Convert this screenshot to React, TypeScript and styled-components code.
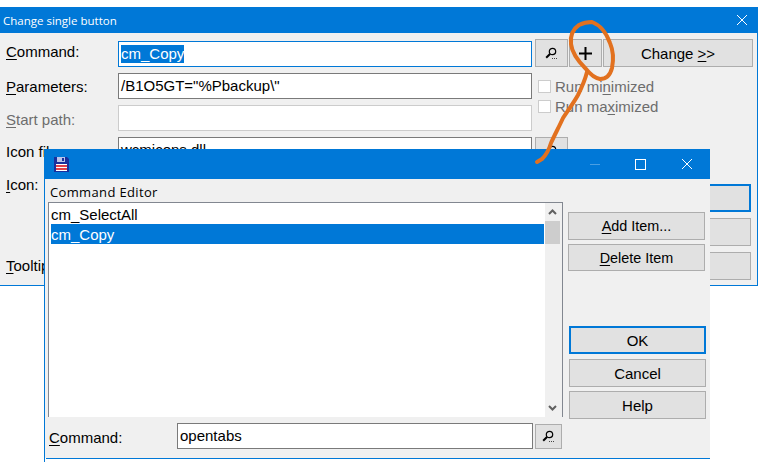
import React from "react";
import styled, { createGlobalStyle } from "styled-components";

const Global = createGlobalStyle`
  html, body { margin: 0; padding: 0; background: #fff; overflow: hidden; }
  * { box-sizing: border-box; }
  u { text-underline-offset: 2px; }
`;

const Desktop = styled.div`
  position: relative;
  width: 760px;
  height: 465px;
  background: #fff;
  overflow: hidden;
  font-family: "Liberation Sans", Arial, sans-serif;
  font-size: 15px;
  color: #000;
`;

const BackWindow = styled.section`
  position: absolute;
  left: 0;
  top: 7px;
  width: 758px;
  height: 279px;
  display: flex;
  flex-direction: column;
  background: #f0f0f0;
  border-right: 1px solid #0078d7;
  border-bottom: 1px solid #0078d7;
`;

const FrontWindow = styled.section`
  position: absolute;
  left: 44px;
  top: 149px;
  width: 666px;
  height: 313px;
  border-left: 1px solid #0078d7;
  display: flex;
  flex-direction: column;
`;

const TitleBar = styled.header<{ $h: number }>`
  height: ${(p) => p.$h}px;
  flex: none;
  background: #0078d7;
  color: #fff;
  display: flex;
  align-items: center;
  font-family: "Open Sans", "Noto Sans", sans-serif;
  font-size: 11.5px;
`;

const TitleText = styled.span`
  padding-left: 3px;
  flex: 1;
`;

const TitleSpacer = styled.span`
  flex: 1;
`;

const IconSlot = styled.span<{ $w: number }>`
  width: ${(p) => p.$w}px;
  display: flex;
  align-items: center;
  justify-content: center;
  flex: none;
`;

const BackBody = styled.div`
  flex: 1;
  display: flex;
  padding-top: 6px;
  min-height: 0;
`;

const FormColumn = styled.div`
  width: 535px;
  flex: none;
  display: flex;
  flex-direction: column;
`;

const FormRow = styled.div<{ $h?: number }>`
  height: ${(p) => p.$h ?? 32}px;
  display: flex;
  align-items: flex-start;
  padding-left: 6px;
`;

const FieldLabel = styled.label<{ $off?: number; $muted?: boolean; $w?: number }>`
  width: ${(p) => p.$w ?? 112}px;
  flex: none;
  padding-top: ${(p) => p.$off ?? 7}px;
  line-height: 17px;
  color: ${(p) => (p.$muted ? "#6d6d6d" : "#000")};
`;

const Field = styled.div<{ $state?: "focus" | "disabled"; $w: number }>`
  width: ${(p) => p.$w}px;
  height: 26px;
  margin-top: 2px;
  flex: none;
  background: #fff;
  border: 1px solid
    ${(p) =>
      p.$state === "focus" ? "#0078d7" : p.$state === "disabled" ? "#cccccc" : "#7a7a7a"};
  padding: 2px 2px 0;
  line-height: 20px;
  white-space: nowrap;
  overflow: hidden;
`;

const Selected = styled.span`
  background: #0078d7;
  color: #fff;
  display: inline-block;
  height: 18px;
  line-height: 18px;
`;

const SideColumn = styled.div`
  flex: 1;
  display: flex;
  flex-direction: column;
  padding-right: 4px;
`;

const ButtonRow = styled.div`
  display: flex;
  gap: 1px;
  height: 28px;
`;

const Button = styled.button<{ $default?: boolean; $w?: number; $h?: number; $grow?: boolean }>`
  width: ${(p) => (p.$w ? `${p.$w}px` : "100%")};
  height: ${(p) => p.$h ?? 28}px;
  flex: ${(p) => (p.$grow ? "1" : "none")};
  background: #e1e1e1;
  border: ${(p) => (p.$default ? "2px solid #0078d7" : "1px solid #adadad")};
  border-radius: 0;
  padding: 0;
  display: flex;
  align-items: center;
  justify-content: center;
  font: inherit;
  color: #000;
`;

const ItemButton = styled(Button)`
  font-size: 14.4px;
`;

const OkButton = styled(Button)`
  margin-bottom: 1px;
`;

const CheckList = styled.div`
  margin-top: 13px;
  padding-left: 3px;
  display: flex;
  flex-direction: column;
  gap: 7px;
`;

const CheckRow = styled.div`
  display: flex;
  align-items: center;
  height: 13px;
  gap: 4px;
  color: #6d6d6d;
`;

const CheckBox = styled.span`
  width: 13px;
  height: 13px;
  background: #fff;
  border: 1px solid #cccccc;
  flex: none;
`;

const BrowseSlot = styled.div`
  margin-top: 24px;
`;

const DialogButtons = styled.div`
  margin: 19px 2px 0 0;
  align-self: flex-end;
  display: flex;
  flex-direction: column;
  gap: 6px;
`;

const FrontBody = styled.div`
  height: 279px;
  flex: none;
  background: #f0f0f0;
  display: flex;
  padding-left: 3px;
`;

const FrontLine = styled.div`
  height: 1px;
  flex: none;
  background: #0078d7;
  margin-left: 1px;
`;

const MainColumn = styled.div`
  width: 515px;
  flex: none;
  display: flex;
  flex-direction: column;
`;

const Heading = styled.div`
  height: 23px;
  padding: 5px 0 0 2px;
  font-family: "Open Sans", "Noto Sans", sans-serif;
  font-size: 13px;
  line-height: 17px;
  letter-spacing: 0.35px;
`;

const ListBox = styled.div`
  height: 215px;
  flex: none;
  display: flex;
  background: #fff;
  border-top: 1px solid #828790;
  border-left: 1px solid #828790;
  border-right: 1px solid #828790;
`;

const Items = styled.ul`
  flex: 1;
  margin: 0;
  padding: 1px 0 0 2px;
  list-style: none;
`;

const Item = styled.li<{ $active?: boolean }>`
  height: 20px;
  line-height: 21px;
  margin-right: 1px;
  background: ${(p) => (p.$active ? "#0078d7" : "transparent")};
  color: ${(p) => (p.$active ? "#fff" : "#000")};
`;

const Scrollbar = styled.div`
  width: 17px;
  flex: none;
  padding-right: 2px;
  background: #f0f0f0;
  display: flex;
  flex-direction: column;
  align-items: stretch;
`;

const ScrollArrow = styled.div`
  height: 18px;
  flex: none;
  display: flex;
  align-items: center;
  justify-content: center;
`;

const ScrollThumb = styled.div`
  height: 23px;
  flex: none;
  background: #cdcdcd;
`;

const ScrollTrack = styled.div`
  flex: 1;
`;

const BottomRow = styled.div`
  display: flex;
  align-items: flex-start;
  padding: 4px 0 0 1px;
`;

const LookupSlot = styled.div`
  margin: 3px 0 0 2px;
`;

const RightColumn = styled.div`
  flex: 1;
  padding: 33px 4px 0 5px;
  display: flex;
  flex-direction: column;
`;

const ItemButtons = styled.div`
  display: flex;
  flex-direction: column;
  gap: 4px;
  width: 137px;
`;

const ActionButtons = styled.div`
  margin: 55px 0 0 1px;
  display: flex;
  flex-direction: column;
  gap: 4px;
  width: 137px;
`;

const Annotation = styled.svg`
  position: absolute;
  left: 0;
  top: 0;
  width: 760px;
  height: 465px;
  pointer-events: none;
`;

const Close = () => (
  <svg width="12" height="12" viewBox="0 0 12 12" fill="none" stroke="#fff" strokeWidth="1">
    <path d="M1 1l10 10M11 1L1 11" />
  </svg>
);

const Search = () => (
  <svg width="13" height="13" viewBox="0 0 13 13" fill="none" stroke="#000">
    <circle cx="7.5" cy="4.5" r="3.2" strokeWidth="1.2" />
    <path d="M5 7L1.2 10.8" strokeWidth="2" />
    <path d="M7 11.5h1M9 11.5h1M11 11.5h1" strokeWidth="1" stroke="#444" />
  </svg>
);

const Plus = () => (
  <svg width="13" height="13" viewBox="0 0 13 13" stroke="#000" strokeWidth="2">
    <path d="M6.5 0v13M0 6.5h13" />
  </svg>
);

const Floppy = () => (
  <svg width="17" height="17" viewBox="0 0 17 17">
    <path d="M1 1h13l2 2v13H1z" fill="#1a2f9c" />
    <rect x="4" y="1" width="8" height="5" fill="#b9c4ea" />
    <rect x="9" y="2" width="2" height="3" fill="#1a2f9c" />
    <rect x="3" y="8" width="11" height="7" fill="#fff" />
    <rect x="3" y="9" width="11" height="2" fill="#e0404a" />
    <rect x="3" y="12" width="11" height="2" fill="#e0404a" />
  </svg>
);

const Chevron = ({ up }: { up?: boolean }) => (
  <svg width="9" height="6" viewBox="0 0 9 6" fill="none" stroke="#606060" strokeWidth="2">
    <path d={up ? "M1 5l3.5-3.5L8 5" : "M1 1l3.5 3.5L8 1"} />
  </svg>
);

export default function App() {
  return (
    <Desktop>
      <Global />
      <BackWindow>
        <TitleBar $h={26}>
          <TitleText>Change single button</TitleText>
          <IconSlot $w={31}>
            <Close />
          </IconSlot>
        </TitleBar>
        <BackBody>
          <FormColumn>
            <FormRow>
              <FieldLabel $off={4}>
                <u>C</u>ommand:
              </FieldLabel>
              <Field $w={414} $state="focus">
                <Selected>cm_Copy</Selected>
              </Field>
            </FormRow>
            <FormRow>
              <FieldLabel>
                <u>P</u>arameters:
              </FieldLabel>
              <Field $w={414}>/B1O5GT="%Pbackup\"</Field>
            </FormRow>
            <FormRow>
              <FieldLabel $muted $off={8}>
                <u>S</u>tart path:
              </FieldLabel>
              <Field $w={414} $state="disabled" />
            </FormRow>
            <FormRow>
              <FieldLabel $off={8}>Icon file:</FieldLabel>
              <Field $w={414}>wcmicons.dll</Field>
            </FormRow>
            <FormRow $h={68}>
              <FieldLabel $off={9}>
                <u>I</u>con:
              </FieldLabel>
            </FormRow>
            <FormRow>
              <FieldLabel $off={22}>
                <u>T</u>ooltip:
              </FieldLabel>
            </FormRow>
          </FormColumn>
          <SideColumn>
            <ButtonRow>
              <Button $w={33}>
                <Search />
              </Button>
              <Button $w={33}>
                <Plus />
              </Button>
              <Button $grow>
                <span>
                  Change <u>&gt;</u>&gt;
                </span>
              </Button>
            </ButtonRow>
            <CheckList>
              <CheckRow>
                <CheckBox />
                <span>
                  Run mi<u>n</u>imized
                </span>
              </CheckRow>
              <CheckRow>
                <CheckBox />
                <span>
                  Run ma<u>x</u>imized
                </span>
              </CheckRow>
            </CheckList>
            <BrowseSlot>
              <Button $w={33}>
                <Search />
              </Button>
            </BrowseSlot>
            <DialogButtons>
              <Button $w={150} $default />
              <Button $w={150} />
              <Button $w={150} />
            </DialogButtons>
          </SideColumn>
        </BackBody>
      </BackWindow>

      <FrontWindow>
        <TitleBar $h={30}>
          <IconSlot $w={8} />
          <Floppy />
          <TitleSpacer />
          <IconSlot $w={46}>
            <svg width="10" height="1" viewBox="0 0 10 1">
              <path d="M0 .5h10" stroke="#4a9fe3" />
            </svg>
          </IconSlot>
          <IconSlot $w={45}>
            <svg width="11" height="11" viewBox="0 0 11 11" fill="none" stroke="#fff">
              <rect x=".5" y=".5" width="10" height="10" />
            </svg>
          </IconSlot>
          <IconSlot $w={47}>
            <Close />
          </IconSlot>
        </TitleBar>
        <FrontBody>
          <MainColumn>
            <Heading>Command Editor</Heading>
            <ListBox>
              <Items>
                <Item>cm_SelectAll</Item>
                <Item $active>cm_Copy</Item>
              </Items>
              <Scrollbar>
                <ScrollArrow>
                  <Chevron up />
                </ScrollArrow>
                <ScrollThumb />
                <ScrollTrack />
                <ScrollArrow>
                  <Chevron />
                </ScrollArrow>
              </Scrollbar>
            </ListBox>
            <BottomRow>
              <FieldLabel $off={8} $w={128}>
                <u>C</u>ommand:
              </FieldLabel>
              <Field $w={356}>opentabs</Field>
              <LookupSlot>
                <Button $w={27} $h={25}>
                  <Search />
                </Button>
              </LookupSlot>
            </BottomRow>
          </MainColumn>
          <RightColumn>
            <ItemButtons>
              <ItemButton>
                <span>
                  <u>A</u>dd Item...
                </span>
              </ItemButton>
              <ItemButton $h={27}>
                <span>
                  <u>D</u>elete Item
                </span>
              </ItemButton>
            </ItemButtons>
            <ActionButtons>
              <OkButton $default>OK</OkButton>
              <Button>Cancel</Button>
              <Button>Help</Button>
            </ActionButtons>
          </RightColumn>
        </FrontBody>
        <FrontLine />
      </FrontWindow>

      <Annotation viewBox="0 0 760 465" fill="none" stroke="#e2711f" strokeWidth="4" strokeLinecap="round" strokeLinejoin="round">
        <path d="M579 25C583 23 586 22 592 22C600 25 606 32 610 43C613 50 614 58 612 68C610 76 606 79 600 79C594 78 590 74 586 69C580 63 572 54 571 44C570 35 573 29 579 25" />
        <path d="M587 72C585 80 582 87 578 95C573 104 568 110 563 118C559 127 555 134 551 143C549 150 546 155 542 159L537 162" />
      </Annotation>
    </Desktop>
  );
}
